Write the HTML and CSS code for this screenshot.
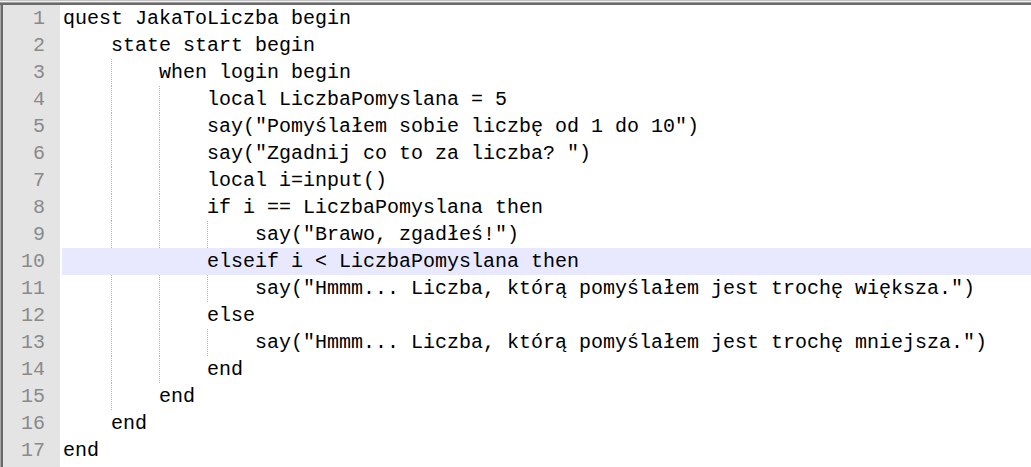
FILE: index.html
```html
<!DOCTYPE html>
<html>
<head>
<meta charset="utf-8">
<link rel="stylesheet" href="styles.css">
</head>
<body>
<div class="window">
  <div class="topbar"></div>
  <div class="editor">
    <div class="row"><div class="num">1</div><div class="code"><span class="txt">quest JakaToLiczba begin</span></div></div>
    <div class="row"><div class="num">2</div><div class="code"><span class="ind"></span><span class="txt">state start begin</span></div></div>
    <div class="row"><div class="num">3</div><div class="code"><span class="ind"></span><span class="ind g"></span><span class="txt">when login begin</span></div></div>
    <div class="row"><div class="num">4</div><div class="code"><span class="ind"></span><span class="ind g"></span><span class="ind g"></span><span class="txt">local LiczbaPomyslana = 5</span></div></div>
    <div class="row"><div class="num">5</div><div class="code"><span class="ind"></span><span class="ind g"></span><span class="ind g"></span><span class="txt">say("Pomyślałem sobie liczbę od 1 do 10")</span></div></div>
    <div class="row"><div class="num">6</div><div class="code"><span class="ind"></span><span class="ind g"></span><span class="ind g"></span><span class="txt">say("Zgadnij co to za liczba? ")</span></div></div>
    <div class="row"><div class="num">7</div><div class="code"><span class="ind"></span><span class="ind g"></span><span class="ind g"></span><span class="txt">local i=input()</span></div></div>
    <div class="row"><div class="num">8</div><div class="code"><span class="ind"></span><span class="ind g"></span><span class="ind g"></span><span class="txt">if i == LiczbaPomyslana then</span></div></div>
    <div class="row"><div class="num">9</div><div class="code"><span class="ind"></span><span class="ind g"></span><span class="ind g"></span><span class="ind g"></span><span class="txt">say("Brawo, zgadłeś!")</span></div></div>
    <div class="row current"><div class="num">10</div><div class="code"><span class="ind"></span><span class="ind"></span><span class="ind"></span><span class="txt">elseif i &lt; LiczbaPomyslana then</span></div></div>
    <div class="row"><div class="num">11</div><div class="code"><span class="ind"></span><span class="ind g"></span><span class="ind g"></span><span class="ind g"></span><span class="txt">say("Hmmm... Liczba, którą pomyślałem jest trochę większa.")</span></div></div>
    <div class="row"><div class="num">12</div><div class="code"><span class="ind"></span><span class="ind g"></span><span class="ind g"></span><span class="txt">else</span></div></div>
    <div class="row"><div class="num">13</div><div class="code"><span class="ind"></span><span class="ind g"></span><span class="ind g"></span><span class="ind g"></span><span class="txt">say("Hmmm... Liczba, którą pomyślałem jest trochę mniejsza.")</span></div></div>
    <div class="row"><div class="num">14</div><div class="code"><span class="ind"></span><span class="ind g"></span><span class="ind g"></span><span class="txt">end</span></div></div>
    <div class="row"><div class="num">15</div><div class="code"><span class="ind"></span><span class="ind g"></span><span class="txt">end</span></div></div>
    <div class="row"><div class="num">16</div><div class="code"><span class="ind"></span><span class="txt">end</span></div></div>
    <div class="row"><div class="num">17</div><div class="code"><span class="txt">end</span></div></div>
  </div>
</div>
</body>
</html>
```

FILE: styles.css
```css
html, body {
  margin: 0;
  padding: 0;
  background: #ffffff;
}

.window {
  width: 1031px;
  height: 467px;
  overflow: hidden;
  display: flex;
  flex-direction: column;
}

.topbar {
  height: 5px;
  flex: none;
  background: linear-gradient(to bottom, #c4c4c4 0, #c4c4c4 1px, #f0f0f0 1px, #f0f0f0 2px, #a0a0a0 2px, #a0a0a0 3px, #6a6a6a 3px, #6a6a6a 5px);
}

.editor {
  flex: 1;
  border-left: 1px solid #a8a8a8;
  box-shadow: inset 2px 0 0 #6a6a6a;
  padding-left: 2px;
  font-family: "Liberation Mono", "DejaVu Sans Mono", monospace;
  font-size: 20px;
  color: #000000;
  background: linear-gradient(to right, #e4e4e4 0, #e4e4e4 59px, #ffffff 59px);
}

.row {
  display: flex;
  height: 27px;
  line-height: 27px;
}

.num {
  width: 42px;
  padding-right: 17px;
  text-align: right;
  color: #8a8a8a;
  flex: none;
}

.code {
  display: flex;
  flex: 1;
  padding-left: 1px;
}

.current .code {
  background: #e8e8ff;
}

.ind {
  width: 48px;
  height: 27px;
  flex: none;
  box-sizing: border-box;
}

.ind.g {
  border-left: 1px dotted #b4b4b4;
}

.txt {
  white-space: pre;
}
```
